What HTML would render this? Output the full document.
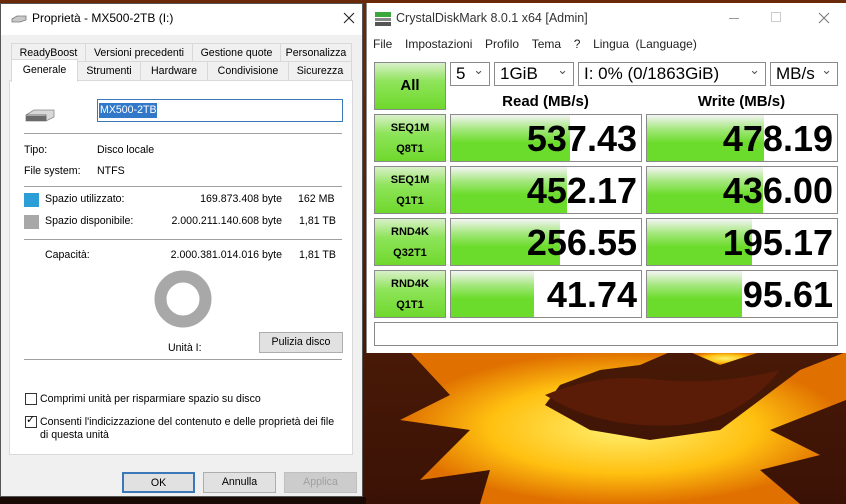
<!DOCTYPE html>
<html><head><meta charset="utf-8"><style>
*{margin:0;padding:0;box-sizing:border-box}
body{width:846px;height:504px;overflow:hidden;position:relative;background:#2a0e05;font-family:"Liberation Sans",sans-serif;font-size:12px;color:#000}
.abs{position:absolute}
.t{position:absolute;white-space:nowrap;font-size:10.6px;line-height:14px}
.tab{position:absolute;border:1px solid #d9d9d9;background:#f0f0f0;font-size:10.6px;text-align:center;line-height:18px}
.sep{position:absolute;left:24px;width:318px;height:1px;background:#a0a0a0}
.btn{position:absolute;background:#e1e1e1;border:1px solid #adadad;text-align:center;font-size:10.6px}
.cb{position:absolute;width:12px;height:12px;border:1px solid #333;background:#fff}
.g{position:absolute;border:1px solid #8a8a8a;background:linear-gradient(#d8f0c8,#8ee45a 40%,#6fd82c);text-align:center;font-weight:bold;font-size:11px}
.cell{position:absolute;border:1px solid #8a8a8a;background:#fff;overflow:hidden}
.fill{position:absolute;left:0;top:0;bottom:0;background:linear-gradient(#f4f4f4,#a6e880 30%,#6cdc2c 60%,#6cdc2c)}
.num{position:absolute;right:4px;top:4px;font-weight:bold;font-size:36px;line-height:40px}
.dd{position:absolute;height:24px;border:1px solid #8a8a8a;background:#fff;font-size:17px;line-height:22px;padding-left:5px}
.dd:after{content:"⌄";position:absolute;right:5px;top:-4px;font-size:13px;color:#555}
</style></head><body>
<svg class="abs" style="left:0;top:0" width="846" height="504">
<defs>
<linearGradient id="bg" x1="0" x2="0" y1="0" y2="1"><stop offset="0" stop-color="#6a2a0a"/><stop offset="1" stop-color="#3a1205"/></linearGradient>
<radialGradient id="sun" cx="0.5" cy="0.5" r="0.5"><stop offset="0" stop-color="#fff070"/><stop offset="0.6" stop-color="#ffc010"/><stop offset="1" stop-color="#e07000"/></radialGradient>
</defs>
<rect width="846" height="504" fill="url(#bg)"/>
<g fill="url(#sun)">
<path d="M410 352 L450 395 L400 420 L470 430 L420 480 L490 470 L480 504 L800 504 L760 470 L820 455 L770 430 L846 400 L846 352 L800 370 L760 400 L720 430 L650 440 L590 430 L545 405 L560 385 L600 370 L640 365 L670 352 Z"/>
<path d="M690 352 L720 365 L760 352 Z"/>
</g>
<path d="M545 395 Q600 372 660 380 Q720 385 780 370 Q740 420 680 425 Q600 430 545 395Z" fill="#5a1c06"/>
<rect x="0" y="497" width="366" height="7" fill="#1a0a05"/>
</svg>

<div class="abs" style="left:0;top:3px;width:363px;height:494px;background:#f0f0f0;border:1px solid #555"></div>
<div class="abs" style="left:1px;top:4px;width:361px;height:31px;background:#fff"></div>
<svg class="abs" style="left:11px;top:15px" width="16" height="8"><path d="M1 4 L6 1 L15 1 L15 5 L9 7 L1 7Z" fill="#c8c8c8" stroke="#777" stroke-width="0.8"/></svg>
<div class="t" style="left:32px;top:11px;font-size:12px">Proprietà - MX500-2TB (I:)</div>
<svg class="abs" style="left:343px;top:12px" width="12" height="12"><path d="M1 1L11 11M11 1L1 11" stroke="#222" stroke-width="1.1"/></svg>

<div class="tab" style="left:11px;top:43px;width:75px;height:19px">ReadyBoost</div>
<div class="tab" style="left:85px;top:43px;width:108px;height:19px">Versioni precedenti</div>
<div class="tab" style="left:192px;top:43px;width:89px;height:19px">Gestione quote</div>
<div class="tab" style="left:280px;top:43px;width:72px;height:19px">Personalizza</div>
<div class="tab" style="left:77px;top:61px;width:64px;height:20px">Strumenti</div>
<div class="tab" style="left:140px;top:61px;width:68px;height:20px">Hardware</div>
<div class="tab" style="left:207px;top:61px;width:82px;height:20px">Condivisione</div>
<div class="tab" style="left:288px;top:61px;width:64px;height:20px">Sicurezza</div>
<div class="abs" style="left:9px;top:80px;width:344px;height:375px;background:#fff;border:1px solid #d9d9d9"></div>
<div class="tab" style="left:11px;top:59px;width:67px;height:23px;background:#fff;border-bottom:none;line-height:20px">Generale</div>

<svg class="abs" style="left:24px;top:107px" width="32" height="16"><path d="M2 8 L10 3 L30 3 L30 10 L22 14 L2 14Z" fill="#d8d8d8" stroke="#888" stroke-width="0.8"/><path d="M2 8 L22 8 L22 14" fill="none" stroke="#777"/><rect x="2" y="9" width="20" height="5" fill="#6a6a6a"/></svg>
<div class="abs" style="left:97px;top:99px;width:246px;height:23px;border:1px solid #3a78b8;background:#fff"></div>
<div class="abs" style="left:99px;top:103px;width:58px;height:15px;background:#3278c8"></div>
<div class="t" style="left:100px;top:103px;color:#fff">MX500-2TB</div>
<div class="sep" style="top:133px"></div>
<div class="t" style="left:24px;top:143px">Tipo:</div><div class="t" style="left:97px;top:143px">Disco locale</div>
<div class="t" style="left:24px;top:164px">File system:</div><div class="t" style="left:97px;top:164px">NTFS</div>
<div class="sep" style="top:186px"></div>
<div class="abs" style="left:24px;top:193px;width:15px;height:14px;background:#2b9ed8"></div>
<div class="abs" style="left:24px;top:215px;width:15px;height:14px;background:#a8a8a8"></div>
<div class="t" style="left:45px;top:192px">Spazio utilizzato:</div>
<div class="t" style="left:45px;top:214px">Spazio disponibile:</div>
<div class="t" style="left:160px;top:192px;width:122px;text-align:right">169.873.408 byte</div>
<div class="t" style="left:298px;top:192px">162 MB</div>
<div class="t" style="left:160px;top:214px;width:122px;text-align:right">2.000.211.140.608 byte</div>
<div class="t" style="left:299px;top:214px">1,81 TB</div>
<div class="sep" style="top:239px"></div>
<div class="t" style="left:45px;top:248px">Capacità:</div>
<div class="t" style="left:160px;top:248px;width:122px;text-align:right">2.000.381.014.016 byte</div>
<div class="t" style="left:299px;top:248px">1,81 TB</div>
<svg class="abs" style="left:154px;top:270px" width="58" height="58"><circle cx="29" cy="29" r="22.5" fill="none" stroke="#a8a8a8" stroke-width="12"/></svg>
<div class="t" style="left:168px;top:341px">Unità I:</div>
<div class="btn" style="left:259px;top:332px;width:84px;height:21px;line-height:19px">Pulizia disco</div>
<div class="sep" style="top:359px"></div>
<div class="cb" style="left:25px;top:393px"></div>
<div class="t" style="left:40px;top:392px">Comprimi unità per risparmiare spazio su disco</div>
<div class="cb" style="left:25px;top:416px"></div>
<div class="t" style="left:26px;top:413px;font-size:11px">✓</div>
<div class="t" style="left:40px;top:415px">Consenti l'indicizzazione del contenuto e delle proprietà dei file</div>
<div class="t" style="left:40px;top:428px">di questa unità</div>
<div class="btn" style="left:122px;top:472px;width:73px;height:21px;line-height:19px;border:2px solid #3a78b8">OK</div>
<div class="btn" style="left:203px;top:472px;width:73px;height:21px;line-height:19px">Annulla</div>
<div class="btn" style="left:284px;top:472px;width:73px;height:21px;line-height:19px;color:#a0a0a0;background:#ccc;border-color:#bfbfbf">Applica</div>

<div class="abs" style="left:366px;top:3px;width:480px;height:350px;background:#fff;border-left:1px solid #888"></div>
<svg class="abs" style="left:374px;top:11px" width="18" height="16"><rect x="1" y="1" width="16" height="5" fill="#3aa83a"/><rect x="1" y="7" width="16" height="3" fill="#888"/><rect x="1" y="11" width="16" height="4" fill="#555"/></svg>
<div class="t" style="left:396px;top:11px;font-size:12.5px;color:#333">CrystalDiskMark 8.0.1 x64 [Admin]</div>
<div class="abs" style="left:729px;top:18px;width:10px;height:1px;background:#999"></div>
<div class="abs" style="left:771px;top:12px;width:10px;height:10px;border:1px solid #ccc"></div>
<svg class="abs" style="left:818px;top:12px" width="12" height="12"><path d="M1 1L11 11M11 1L1 11" stroke="#777" stroke-width="1"/></svg>
<div class="t" style="left:373px;top:37px;font-size:12px;color:#222;word-spacing:3px">File &nbsp;Impostazioni &nbsp;Profilo &nbsp;Tema &nbsp;? &nbsp;Lingua (Language)</div>

<div class="g" style="left:374px;top:62px;width:72px;height:48px;font-size:15px;line-height:46px">All</div>
<div class="dd" style="left:450px;top:62px;width:40px">5</div>
<div class="dd" style="left:494px;top:62px;width:80px">1GiB</div>
<div class="dd" style="left:578px;top:62px;width:188px">I: 0% (0/1863GiB)</div>
<div class="dd" style="left:770px;top:62px;width:68px">MB/s</div>
<div class="t" style="left:450px;top:93px;width:191px;text-align:center;font-weight:bold;font-size:15px;line-height:18px">Read (MB/s)</div>
<div class="t" style="left:646px;top:93px;width:191px;text-align:center;font-weight:bold;font-size:15px;line-height:18px">Write (MB/s)</div>

<div class="g" style="left:374px;top:114px;width:72px;height:48px;line-height:21px;padding-top:3px">SEQ1M<br>Q8T1</div>
<div class="cell" style="left:450px;top:114px;width:192px;height:48px"><div class="fill" style="width:119px"></div><div class="num">537.43</div></div>
<div class="cell" style="left:646px;top:114px;width:192px;height:48px"><div class="fill" style="width:117px"></div><div class="num">478.19</div></div>

<div class="g" style="left:374px;top:166px;width:72px;height:48px;line-height:21px;padding-top:3px">SEQ1M<br>Q1T1</div>
<div class="cell" style="left:450px;top:166px;width:192px;height:48px"><div class="fill" style="width:116px"></div><div class="num">452.17</div></div>
<div class="cell" style="left:646px;top:166px;width:192px;height:48px"><div class="fill" style="width:116px"></div><div class="num">436.00</div></div>

<div class="g" style="left:374px;top:218px;width:72px;height:48px;line-height:21px;padding-top:3px">RND4K<br>Q32T1</div>
<div class="cell" style="left:450px;top:218px;width:192px;height:48px"><div class="fill" style="width:109px"></div><div class="num">256.55</div></div>
<div class="cell" style="left:646px;top:218px;width:192px;height:48px"><div class="fill" style="width:105px"></div><div class="num">195.17</div></div>

<div class="g" style="left:374px;top:270px;width:72px;height:48px;line-height:21px;padding-top:3px">RND4K<br>Q1T1</div>
<div class="cell" style="left:450px;top:270px;width:192px;height:48px"><div class="fill" style="width:83px"></div><div class="num">41.74</div></div>
<div class="cell" style="left:646px;top:270px;width:192px;height:48px"><div class="fill" style="width:95px"></div><div class="num">95.61</div></div>

<div class="abs" style="left:374px;top:322px;width:464px;height:24px;border:1px solid #8a8a8a;background:#fff"></div>
</body></html>
